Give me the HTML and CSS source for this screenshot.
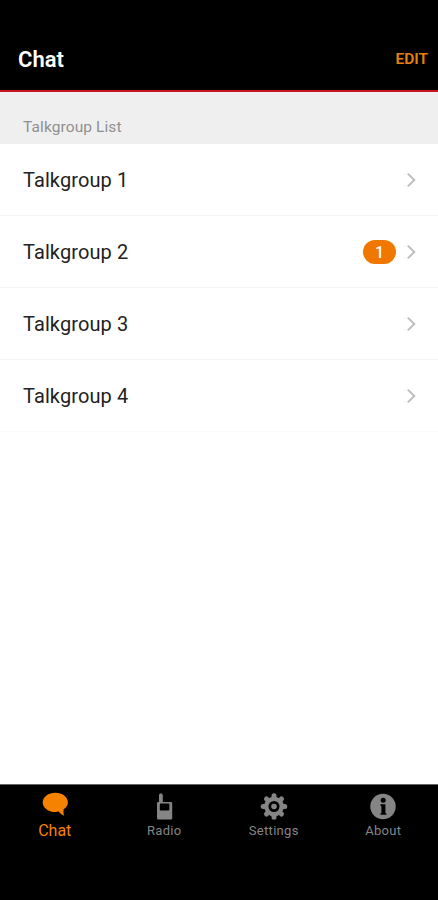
FILE: index.html
```
<!DOCTYPE html>
<html lang="en">
<head>
    <meta charset="UTF-8">
    <meta name="viewport" content="width=device-width, initial-scale=1.0">
    <title>Chat</title>
    <link rel="stylesheet" href="styles.css">
</head>
<body>
    <header class="header">
        <h1>Chat</h1>
        <button class="edit">EDIT</button>
    </header>

    <main>
        <h2 class="section-title">Talkgroup List</h2>
        <ul class="list">
            <li class="row">
                <span class="name">Talkgroup 1</span>
                <svg class="chevron" viewBox="0 0 10 16"><path d="M1.8 1.6 8.300 8 1.8 14.400"/></svg>
            </li>
            <li class="row">
                <span class="name">Talkgroup 2</span>
                <span class="badge">1</span>
                <svg class="chevron" viewBox="0 0 10 16"><path d="M1.8 1.6 8.300 8 1.8 14.400"/></svg>
            </li>
            <li class="row">
                <span class="name">Talkgroup 3</span>
                <svg class="chevron" viewBox="0 0 10 16"><path d="M1.8 1.6 8.300 8 1.8 14.400"/></svg>
            </li>
            <li class="row">
                <span class="name">Talkgroup 4</span>
                <svg class="chevron" viewBox="0 0 10 16"><path d="M1.8 1.6 8.300 8 1.8 14.400"/></svg>
            </li>
        </ul>
    </main>

    <nav class="tabs">
        <a class="tab active">
            <svg class="icon" viewBox="0 0 28 28">
                <path d="M14.3 .8C7.4 .8 1.7 5 1.7 10.4c0 5.3 5.6 9.6 12.6 9.6 1.2 0 2.4-.1 3.5-.4 1.5 2 3.2 3.5 5.4 4.2-.7-1.7-.9-3.9-.6-6.5 2.7-1.8 4.3-4.2 4.3-6.9C26.9 5 21.2 .8 14.3 .8z"/>
            </svg>
            <span>Chat</span>
        </a>
        <a class="tab">
            <svg class="icon" viewBox="0 0 28 28">
                <path fill-rule="evenodd" d="M9 3.2c0-2.300 3.800-2.300 3.800 0V10h8.200a1.200 1.200 0 0 1 1.200 1.200v15a1.200 1.200 0 0 1-1.200 1.200H8.200A1.200 1.200 0 0 1 7 26.200v-15A1.200 1.200 0 0 1 8.200 10H9zM10.800 11.600a1 1 0 0 0-1 1v4.800a1 1 0 0 0 1 1h7.600a1 1 0 0 0 1-1v-4.800a1 1 0 0 0-1-1z"/>
            </svg>
            <span>Radio</span>
        </a>
        <a class="tab">
            <svg class="icon" viewBox="0 0 28 28">
                <path class="teeth" d="M14 3.700v21.600M3.200 14.500h21.600M6.500 7l15 15M21.500 7l-15 15"/>
                <circle cx="14" cy="14.500" r="9.800"/>
                <circle class="hole" cx="14" cy="14.500" r="5.500"/>
                <circle cx="14" cy="14.500" r="2.800"/>
            </svg>
            <span>Settings</span>
        </a>
        <a class="tab">
            <svg class="icon" viewBox="0 0 28 28">
                <circle cx="14" cy="14.500" r="12.700"/>
                <circle class="hole" cx="14.200" cy="8.200" r="2.500"/>
                <path class="hole" d="M11.500 12.300h4.900v8.900h1v1.600h-5.900v-1.600h.9v-7.300h-.9z"/>
            </svg>
            <span>About</span>
        </a>
    </nav>
</body>
</html>
```
FILE: styles.css
```
* {
    box-sizing: border-box;
}
body {
    margin: 0;
    height: 100vh;
    display: flex;
    flex-direction: column;
    font-family: Roboto, sans-serif;
    background: #fff;
    color: #222;
}
.header {
    flex-shrink: 0;
    height: 92px;
    padding: 28px 10px 0 18px;
    display: flex;
    justify-content: space-between;
    align-items: center;
    background: #000;
    border-bottom: 2px solid #c4161c;
}
h1 {
    margin: 0;
    font-size: 22px;
    font-weight: 600;
    color: #fff;
}
.edit {
    padding: 0;
    border: none;
    background: none;
    font-family: inherit;
    font-size: 15.5px;
    font-weight: 600;
    color: #e8800c;
}
main {
    flex: 1;
}
.section-title {
    margin: 0;
    height: 52px;
    padding: 26px 23px 0;
    font-size: 15.5px;
    font-weight: 400;
    line-height: 18px;
    letter-spacing: 0.1px;
    color: #909090;
    background: #efefef;
}
.list {
    margin: 0;
    padding: 0;
    list-style: none;
}
.row {
    height: 72px;
    padding: 1px 22px 0 23px;
    display: flex;
    align-items: center;
    border-bottom: 1px solid #f6f6f6;
}
.row:last-child {
    border-bottom-color: #fbfbfb;
}
.name {
    flex: 1;
    font-size: 20px;
    letter-spacing: 0.1px;
}
.badge {
    width: 33px;
    height: 24px;
    margin-right: 10px;
    border-radius: 12px;
    background: #f07800;
    color: #fff;
    font-size: 16px;
    font-weight: 500;
    line-height: 25px;
    text-align: center;
}
.chevron {
    width: 10px;
    height: 16px;
    fill: none;
    stroke: #bdbdbd;
    stroke-width: 1.9;
}
.tabs {
    flex-shrink: 0;
    height: 116px;
    padding-top: 7px;
    display: flex;
    background: #000;
    border-top: 1px solid #666;
}
.tab {
    flex: 1;
    display: flex;
    flex-direction: column;
    align-items: center;
    font-size: 13px;
    line-height: 18px;
    letter-spacing: 0.3px;
    color: #858585;
}
.tab.active {
    font-size: 16px;
    letter-spacing: 0;
    color: #f58200;
}
.tab span {
    margin-top: 2px;
}
.icon {
    width: 28px;
    height: 28px;
    fill: currentColor;
}
.teeth {
    stroke: currentColor;
    stroke-width: 5;
    stroke-linecap: round;
}
.hole {
    fill: #000;
}
```
